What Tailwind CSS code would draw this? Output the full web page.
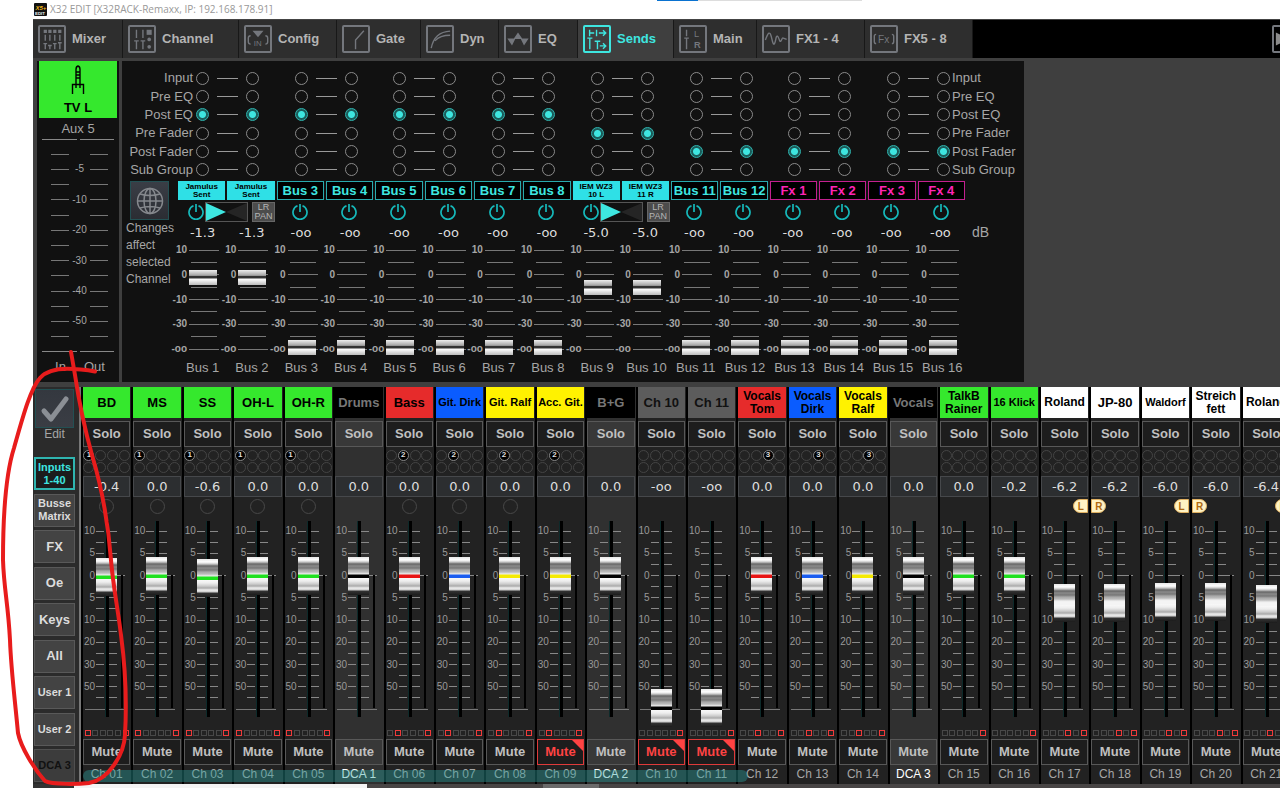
<!DOCTYPE html>
<html lang="en">
<head>
<meta charset="utf-8">
<title>X32 EDIT</title>
<script src="https://cdn.jsdelivr.net/npm/@tailwindcss/browser@4"></script>
</head>
<body class="relative flex min-h-screen flex-col overflow-x-hidden bg-white font-['Liberation_Sans',Arial,sans-serif] text-[#a6a6a6]">

<header class="relative flex h-[19px] shrink-0 items-center gap-[3px] pl-[34px]">
  <svg class="size-[13px]" viewBox="0 0 13 13" aria-hidden="true"><rect width="13" height="13" rx="1" fill="#111"/><text x="1.5" y="7" font-size="6" font-weight="700" font-style="italic" fill="#f0b71c">X5+</text><text x="1" y="11.8" font-size="4.4" font-weight="700" fill="#eee">EDIT</text></svg>
  <h1 class="font-['Open_Sans','Noto_Sans',sans-serif] text-[10px] whitespace-nowrap text-[#999]">X32 EDIT [X32RACK-Remaxx, IP: 192.168.178.91]</h1>
  <div class="absolute top-0 left-[657px] flex h-px w-[205px] bg-[#ddd]"><div class="w-[41px] bg-[#0a72d0]"></div></div>
</header>

<main class="ml-[33px] flex flex-1 flex-col overflow-hidden bg-[#3f3f3f]">
  <nav class="flex h-[39px] shrink-0 overflow-hidden bg-black border-t border-[#444]" id="tabs" aria-label="Views"></nav>

  <section class="flex h-[329px] shrink-0 items-start pt-[3px]">
    <!-- Selected channel meter -->
    <div class="ml-[4px] flex h-[321px] w-[82px] shrink-0 flex-col border-[#111] bg-[#111] px-[2px]">
      <button class="flex h-[57px] shrink-0 flex-col items-center bg-[#35e82d] text-[13px] leading-[16px] font-bold text-black">
        <svg class="mt-[4px] mb-[4px] h-[31px] w-[14px] shrink-0" viewBox="0 0 14 31" fill="none" stroke="#000" stroke-width="1.4" aria-hidden="true"><path d="M5 19V4.500Q5 1.500 7 1Q9 1.500 9 4.500V19M5 7H9M5 10H9M5 13H9M1.500 29V19.500H12.500V29M5 20V23M9 20V23"/></svg>
        TV L
      </button>
      <div class="h-[20px] pt-[2px] text-center text-[13px] leading-[18px]">Aux 5</div>
      <div id="meter" class="flex h-[225px] shrink-0 flex-col justify-between px-[3px] -mt-[5px] text-[10px]"></div>
      <div class="mt-px flex justify-center gap-[18px] pl-[4px] text-[13px] leading-[16px]"><span>In</span><span>Out</span></div>
    </div>
    <div class="ml-px h-[321px] w-[2px] shrink-0 bg-[#3f3f3f]"></div>

    <!-- Sends -->
    <div class="h-[321px] w-[902px] shrink-0 overflow-hidden bg-[#111]">
      <div id="taps" class="mt-[8px] grid h-[110px] grid-rows-6"></div>
      <div class="flex pt-[2px]">
        <div class="w-[56px] shrink-0 pl-[4px]">
          <button aria-label="Changes affect selected channel" class="ml-[4px] flex size-[39px] items-center justify-center border border-[#235053] bg-linear-to-b from-[#3a3e46] to-[#2b2d33]">
            <svg class="size-[28px]" viewBox="0 0 28 28" fill="none" stroke="#85888d" stroke-width="1.500" aria-hidden="true"><circle cx="14" cy="14" r="12.500"/><ellipse cx="14" cy="14" rx="6" ry="12.500"/><path d="M14 1.500V26.500M1.500 14H26.500M4 7Q14 10 24 7M4 21Q14 18 24 21"/></svg>
          </button>
          <p class="w-[52px] text-[12px] leading-[17px]">Changes affect selected Channel</p>
        </div>
        <div class="w-[789px] shrink-0">
          <div id="busNames" class="grid h-[19px] grid-cols-16"></div>
          <div id="busOn" class="grid h-[24px] grid-cols-8"></div>
          <div id="busVal" class="grid h-[18px] grid-cols-16 pr-[2px] font-['DejaVu_Sans',sans-serif] text-[13px] leading-[18px] text-[#ddd]"></div>
          <div id="busFader" class="grid h-[118px] grid-cols-16"></div>
          <div id="busFoot" class="grid h-[16px] grid-cols-16 text-center text-[13px] leading-[16px]"></div>
        </div>
        <div class="pt-[42px] pl-[5px] text-[14px] leading-[18px]">dB</div>
      </div>
    </div>
  </section>

  <section class="flex flex-1 overflow-hidden">
    <!-- Layer selection -->
    <aside class="flex w-[46px] shrink-0 flex-col items-center bg-[#2b2b2b] pr-[3px]">
      <button aria-label="Edit" class="mt-[2px] flex size-[39px] items-center justify-center border border-[#235053] bg-linear-to-b from-[#34383f] to-[#3a3d44]">
        <svg class="size-[30px]" viewBox="0 0 30 30" fill="none" stroke="#8b8f95" stroke-width="5" stroke-linecap="round" stroke-linejoin="round" aria-hidden="true"><path d="M4 17L11 25L26 5"/></svg>
      </button>
      <span class="text-[12px] leading-[13px]">Edit</span>
      <div id="layers" class="mt-[16px] flex h-[325px] w-[41px] flex-col justify-between"></div>
    </aside>
    <div class="flex-1 overflow-hidden border-l-2 border-[#777] bg-black pl-[2px]">
      <div class="relative w-[1210px]">
        <div id="strips" class="grid grid-cols-24"></div>
        <div class="absolute bottom-[2px] left-0 h-[12px] w-[665px] rounded-full bg-[#2ba3a0]/40"></div>
      </div>
    </div>
  </section>

  <footer class="flex h-[4px] shrink-0 bg-[#484545]">
    <div class="w-[41px] shrink-0 bg-[#333]"></div>
    <div class="w-[293px] shrink-0 bg-[#f4f4f4]"></div>
    <div class="ml-[176px] w-[56px] shrink-0 bg-[#6a6a6a]"></div>
  </footer>
</main>

<!-- Hand-drawn marker around the layer buttons -->
<svg class="pointer-events-none absolute top-[345px] left-0 h-[443px] w-[130px]" viewBox="0 345 130 443" fill="none" stroke="#e81c1c" stroke-width="4" stroke-linecap="round" stroke-linejoin="round" aria-hidden="true"><path d="M95 371.500C85 369 80 370 74 369C60 368 47 370 40 378C30 389 22 420 14 448C7 470 3 510 3 560C4 590 8 602 10 640C11 670 15 700 18 733C21 748 35 770 45 781C52 785 80 784 89 783C108 780 124 755 125 735C127 700 125 665 121 635C118 610 113 585 111 560C108 520 101 485 92 455C85 430 78 395 75 375L71 352"/></svg>

<script>
const $ = id => document.getElementById(id);
const rep = (n, f) => Array.from({length: n}, (_, i) => f(i)).join('');

/* Tabs */
const tabs = [
  ['Mixer', 'w-[90px]', '<path d="M5.700 8.500V15M10.700 8.500V15M16 8.500V15M21.500 8.500V15M3.700 18H7.700M5.700 18V24M8.700 20H12.700M10.700 20V24M14 18H18M16 18V24M19.500 17H23.500M21.500 17V24"/><path d="M4 3h3.500v3.500H4zM9 3h3.500v3.500H9zM14.300 3h3.500v3.500h-3.500zM19.700 3h3.500v3.500h-3.500z" fill="currentColor" stroke="none"/>'],
  ['Channel', 'w-[116px]', '<path d="M7 3V12M14 3V12M4.500 15H9.500M7 15V24M11.500 15H16.500M14 15V24"/><path d="M18 3h5.500v5.500H18z" fill="currentColor" stroke="none"/><circle cx="20.800" cy="13.500" r="2" fill="currentColor" stroke="none"/><circle cx="20.800" cy="21.500" r="2" fill="currentColor" stroke="none"/>'],
  ['Config', 'w-[98px]', '<path d="M7 4H19L13 11Z" fill="currentColor" stroke="none"/><path d="M5 9.500Q2.500 9.500 2.500 12V16Q2.500 18.500 5 18.500M21 9.500Q23.500 9.500 23.500 12V16Q23.500 18.500 21 18.500"/><text x="8.500" y="21" font-size="8.500" font-weight="400" fill="currentColor" stroke="none">IN</text>'],
  ['Gate', 'w-[84px]', '<path d="M12.500 24V14L21.500 4"/>'],
  ['Dyn', 'w-[78px]', '<path d="M3.500 23C6 10 13 5 24 4.500M7.500 15C12 10 18 9 24 9"/>'],
  ['EQ', 'w-[79px]', '<path d="M1.500 12.500H8.500L13 6L17.500 12.500H24.500L19.500 20L16 13H10L6.500 20Z" fill="currentColor" stroke="none"/>'],
  ['Sends', 'w-[96px]', '<path d="M5 3V10M5 6.500H10M12.500 3V10M15 6.500H22M19.500 3.500L22.500 6.500L19.500 9.500M2.500 12H8M5.200 12V24M10.500 15.500H16.500M13.500 15.500V24M16 20.500H22M19.500 17.500L22.500 20.500L19.500 23.500"/>'],
  ['Main', 'w-[83px]', '<path d="M6 3V10M3.500 12H8.500M6 12V24"/><text x="14" y="11" font-size="10" font-weight="400" fill="currentColor" stroke="none">L</text><text x="14" y="23" font-size="10" font-weight="700" fill="currentColor" stroke="none">R</text>'],
  ['FX1 - 4', 'w-[108px]', '<path d="M1.500 14C3.500 9 4.500 5.500 6.500 7C8.500 9 9 19.500 11 18.500C13 17 12.500 9 14.500 10C16.500 11 16.500 16.500 18 15.500C19.500 14.500 19.500 11 21 12L24.500 13.500"/>'],
  ['FX5 - 8', 'w-[108px]', '<path d="M4.500 8Q2.500 8 2.500 10V16Q2.500 18 4.500 18M21.500 8Q23.500 8 23.500 10V16Q23.500 18 21.500 18"/><text x="6.500" y="17" font-size="11" font-weight="400" fill="currentColor" stroke="none">Fx</text>'],
];
$('tabs').innerHTML = tabs.map(([t, w, ic]) => {
  const on = t === 'Sends';
  return `<button class="flex shrink-0 items-center gap-[6px] border-r border-[#181818] pl-[5px] text-[13px] font-bold ${w} ${on ? 'bg-[#3f3f3f] text-[#3ee6e0]' : 'bg-[#2e2e2e] text-[#b4b4b4]'}">
    <svg class="size-[28px] shrink-0 rounded-[2px] border-2 ${on ? 'border-[#3ee6e0] text-[#3ee6e0]' : 'border-[#74777d] text-[#74777d]'}" viewBox="0 0 26 26" fill="none" stroke="currentColor" stroke-width="1.500" aria-hidden="true">${ic}</svg>${t}</button>`;
}).join('') + `<button aria-label="Next view" class="ml-[299px] flex shrink-0 items-center"><svg class="size-[28px] rounded-[2px] border-2 border-[#74777d]" viewBox="0 0 26 26" aria-hidden="true"><path d="M2 6L16 13L2 20Z" fill="#8b8b8b"/></svg></button>`;

/* Input and output level meter */
const marks = [null, '', '-5', '', '-10', '', '-20', '', '-30', '', '-40', '', '-50', '', null];
$('meter').innerHTML = marks.map(m => m === null
  ? '<div class="flex h-[12px] items-center gap-[3px]"><i class="h-px flex-1 bg-[#888]"></i><i class="h-px flex-1 bg-[#888]"></i></div>'
  : `<div class="flex h-[12px] items-center pr-[6px] pl-[9px]"><i class="h-px w-[18px] bg-[#777]"></i><span class="flex-1 text-center leading-[12px]">${m}</span><i class="h-px w-[18px] bg-[#777]"></i></div>`).join('');

/* Tap points */
const taps = ['Input', 'Pre EQ', 'Post EQ', 'Pre Fader', 'Post Fader', 'Sub Group'];
const tapOf = b => b < 8 ? 2 : b < 10 ? 3 : 4;
const radio = (b, t) => `<input type="radio" name="tap-${b}" aria-label="Bus ${b + 1} ${taps[t]}" ${tapOf(b) === t ? 'checked' : ''} class="size-[13px] shrink-0 appearance-none rounded-full border border-[#8a8a8a] checked:border-[#2fb5b0] checked:bg-[radial-gradient(circle,#3ee6e0_0_3px,#1b5c5a_4px)]">`;
$('taps').innerHTML = taps.map((t, r) => `<div class="flex items-center text-[13px] whitespace-nowrap"><span class="w-[71px] shrink-0 text-right">${t}</span>
  <div class="ml-[3px] flex w-[754px] shrink-0 justify-between">${rep(8, p => `<div class="flex items-center gap-[8px]">${radio(2 * p, r)}<i class="h-px w-[21px] bg-[#999]"></i>${radio(2 * p + 1, r)}</div>`)}</div><span class="ml-[2px]">${t}</span></div>`).join('');

/* Buses */
const buses = ['Jamulus Sent', 'Jamulus Sent', 'Bus 3', 'Bus 4', 'Bus 5', 'Bus 6', 'Bus 7', 'Bus 8', 'IEM WZ3 10&nbsp;L', 'IEM WZ3 11&nbsp;R', 'Bus 11', 'Bus 12', 'Fx 1', 'Fx 2', 'Fx 3', 'Fx 4'];
const linked = b => b < 2 || b === 8 || b === 9;
$('busNames').innerHTML = buses.map((n, b) => `<button class="mr-[2px] flex items-center justify-center text-center font-bold ${linked(b) ? 'bg-[#2fe0e6] px-[5px] text-[8px] leading-[8px] text-black' : b > 11 ? 'border border-[#c3208f] bg-black text-[13px] leading-[16px] whitespace-nowrap text-[#ff25b5]' : 'border border-[#29a9ad] bg-black text-[13px] leading-[16px] whitespace-nowrap text-[#3ee6e0]'}">${n}</button>`).join('');
const power = b => `<button aria-label="Bus ${b} on" class="size-[16px] shrink-0"><svg class="size-[16px]" viewBox="0 0 16 16" fill="none" stroke="#16b9bb" stroke-width="1.700" aria-hidden="true"><path d="M5.500 1.800A7 7 0 1 0 10.500 1.800M8 0V8"/></svg></button>`;
$('busOn').innerHTML = rep(8, p => linked(2 * p)
  ? `<div class="flex items-center pl-[10px]">${power(2 * p + 1)}<svg class="ml-px h-[20px] w-[43px] shrink-0 border border-[#555] bg-[#111]" viewBox="0 0 41 18" aria-hidden="true"><path d="M0 0L20 9L0 18Z" fill="#3ee6e0"/><path d="M41 0L20 9L41 18Z" fill="#252525"/></svg><button class="ml-[4px] h-[20px] w-[23px] shrink-0 border border-[#666] bg-[#4c4c4c] text-[9px] leading-[9px] text-[#b5b5b5]">LR PAN</button></div>`
  : `<div class="grid grid-cols-2 items-center"><div class="flex pl-[15px]">${power(2 * p + 1)}</div><div class="flex pl-[15px]">${power(2 * p + 2)}</div></div>`);
$('busVal').innerHTML = rep(16, b => `<output class="text-center">${b < 2 ? '-1.3' : linked(b) ? '-5.0' : '-oo'}</output>`);
const sendMarks = ['10', '', '0', '', '-10', '', '-30', '', '-oo'];
const sendVal = b => b < 2 ? 70 : linked(b) ? 60 : 0;
$('busFader').innerHTML = rep(16, b => `<div class="relative pt-[3px]">
  <div class="-ml-[8px] flex h-[109px] flex-col justify-between text-[10px] font-bold">${sendMarks.map(m => `<div class="flex h-[10px] items-center leading-[10px]"><span class="w-[17px] shrink-0 text-right">${m}</span>${m ? '<i class="ml-[2px] h-px w-[30px] shrink-0 bg-[#777]"></i>' : '<i class="ml-[4px] h-px w-[26px] shrink-0 bg-[#777]"></i>'}</div>`).join('')}</div>
  <input type="range" min="0" max="97" value="${sendVal(b)}" aria-label="Bus ${b + 1} send level" class="absolute top-px left-[11px] m-0 h-[112px] w-[28px] appearance-none bg-transparent [direction:rtl] [writing-mode:vertical-lr] [&::-webkit-slider-thumb]:h-[15px] [&::-webkit-slider-thumb]:w-[28px] [&::-webkit-slider-thumb]:appearance-none [&::-webkit-slider-thumb]:bg-[linear-gradient(#eee,#aaa_5px,#888_6px,#333_6px_8px,#fff_9px,#ddd_12px,#bbb)]"></div>`);
$('busFoot').innerHTML = rep(16, b => `<span class="whitespace-nowrap">Bus ${b + 1}</span>`);

/* Layers */
const layers = ['Inputs<br>1-40', 'Busse<br>Matrix', 'FX', 'Oe', 'Keys', 'All', 'User 1', 'User 2', 'DCA 3'];
$('layers').innerHTML = layers.map((l, i) => {
  const face = i < 2 || i > 5 ? 'text-[11px] leading-[13px]' : 'text-[13px] leading-[14px]';
  const tone = i === 0 ? 'border-2 border-[#2fb5b0] bg-[#1c1c1c] text-[#3ee6e0]' : i === 8 ? 'border border-[#505050] bg-[#3c3c3c] text-[#111]' : 'border border-[#595959] bg-[#434343] text-[#dcdcdc]';
  return `<button class="h-[33px] w-[41px] font-bold whitespace-nowrap ${face} ${tone}">${l}</button>`;
}).join('');

/* Channel strips: name, tile, foot, value, cap top, lit mute group, aux ring, lit flags, state */
const G = 'bg-[#35e82d] text-black', R = 'bg-[#e62b2b] text-black', B = 'bg-[#0a5cff] text-black', Y = 'bg-[#fff200] text-black', K = 'bg-black text-[#777]', W = 'bg-white text-black', N = 'bg-[#5c5c5c] text-[#111]';
const line = {[G]: '#1fe01f', [R]: '#e81414', [B]: '#1a5cf0', [Y]: '#f5ea00', [K]: '#000', [W]: '#f4f4f4', [N]: '#000'};
const strips = [
  ['BD', G, 'Ch 01', '-0.4', 558, 1, 1, [0, 5]], ['MS', G, 'Ch 02', '0.0', 557, 1, 1, [0, 5]], ['SS', G, 'Ch 03', '-0.6', 559, 1, 1, [0, 5]],
  ['OH-L', G, 'Ch 04', '0.0', 557, 1, 1, [0, 5]], ['OH-R', G, 'Ch 05', '0.0', 557, 1, 1, [0, 5]], ['Drums', K, 'DCA 1', '0.0', 557, 0, 0, []],
  ['Bass', R, 'Ch 06', '0.0', 557, 2, 1, [1, 5]], ['Git. Dirk', B, 'Ch 07', '0.0', 557, 2, 1, [1, 5]], ['Git. Ralf', Y, 'Ch 08', '0.0', 557, 2, 1, [1, 5]],
  ['Acc. Git.', Y, 'Ch 09', '0.0', 557, 2, 0, [1, 5], 'muted'], ['B+G', K, 'DCA 2', '0.0', 557, 0, 0, []],
  ['Ch 10', N, 'Ch 10', '-oo', 689, 0, 0, [5], 'muted'], ['Ch 11', N, 'Ch 11', '-oo', 689, 0, 0, [5], 'muted'],
  ['Vocals Tom', R, 'Ch 12', '0.0', 557, 3, 0, [2, 5]], ['Vocals Dirk', B, 'Ch 13', '0.0', 557, 3, 0, [2, 5]], ['Vocals Ralf', Y, 'Ch 14', '0.0', 557, 3, 0, [2, 5]],
  ['Vocals', K, 'DCA 3', '0.0', 557, 0, 0, []], ['TalkB Rainer', G, 'Ch 15', '0.0', 557, 0, 0, [5]], ['16 Klick', G, 'Ch 16', '-0.2', 557, 0, 0, [5]],
  ['Roland', W, 'Ch 17', '-6.2', 584, 0, 0, [3, 5], 'L'], ['JP-80', W, 'Ch 18', '-6.2', 584, 0, 0, [3, 5], 'R'],
  ['Waldorf', W, 'Ch 19', '-6.0', 583, 0, 0, [3, 5], 'L'], ['Streich fett', W, 'Ch 20', '-6.0', 583, 0, 0, [3, 5], 'R'], ['Roland', W, 'Ch 21', '-6.4', 585, 0, 0, [3, 5], 'L'],
];
const small = ['Git. Dirk', 'Git. Ralf', 'Acc. Git.', '16 Klick', 'Waldorf'];
const scale = ['10', '', '5', '', '0', '', '5', '', '10', '', '20', '', '30', '', '50', ''];
const tick = m => `<div class="flex h-[10px] items-center leading-[10px]"><span class="w-[12px] shrink-0 text-right">${m}</span><i class="ml-px h-px w-[8px] shrink-0 bg-[#888]"></i><i class="ml-[5px] h-px shrink-0 bg-[#888] ${m === '0' ? 'w-[16px]' : 'w-[8px]'}"></i></div>`;
$('strips').innerHTML = strips.map(([name, tile, foot, val, top, grp, ring, lit, flag]) => {
  const dca = foot.startsWith('DCA'), muted = flag === 'muted';
  const face = small.includes(name) ? 'text-[11px] whitespace-nowrap' : name === 'Roland' ? 'text-[12px] whitespace-nowrap' : name.length > 8 ? 'text-[12px]' : 'text-[13px] whitespace-nowrap';
  return `<div class="flex flex-col border-r-2 border-black pr-px ${dca ? 'bg-[#303030]' : 'bg-[#222]'}">
    <button class="h-[31px] text-center leading-[13px] font-bold ${face} ${tile}">${name}</button>
    <button class="mt-[3px] h-[26px] border border-[#585858] text-[13px] leading-[24px] font-bold text-[#c0c0c0] ${dca ? 'bg-[#383838]' : 'bg-[#1d1d1d]'}">Solo</button>
    <div class="mt-[2px] grid h-[25px] grid-cols-4 place-items-center">${dca ? '' : rep(8, i => grp && i === grp - 1
      ? `<span class="flex size-[11px] items-center justify-center rounded-full border border-[#888] bg-black text-[8px] leading-[8px] font-bold text-[#ddd]">${grp}</span>`
      : '<span class="size-[11px] rounded-full border border-[#444]"></span>')}</div>
    <output class="mt-[2px] h-[21px] border border-[#46484b] bg-[#2c2e30] text-center font-['DejaVu_Sans',sans-serif] text-[13px] leading-[19px] text-[#ddd]">${val}</output>
    <div class="flex h-[18px] items-center ${flag === 'L' ? 'justify-end' : flag === 'R' ? 'justify-start' : 'justify-center'}">${ring ? '<span class="size-[15px] rounded-full border border-[#484848]"></span>' : flag === 'L' || flag === 'R' ? `<span class="flex h-[14px] w-[15px] items-center justify-center border border-[#e0b060] bg-[#fff3c4] text-[10px] font-bold text-[#b06a10] ${flag === 'L' ? 'rounded-l-full' : 'rounded-r-full'}">${flag}</span>` : ''}</div>
    <div class="relative h-[214px] pt-[11px] text-[10px] text-[#999]">
      <div class="flex h-[188px] flex-col justify-between">${scale.map(tick).join('')}<div class="flex h-[10px] items-center"><i class="ml-[2px] h-px w-[40px] bg-[#777]"></i></div></div>
      <i class="absolute top-[6px] left-[22px] h-[196px] w-[4px] border-l border-[#0d2a2a] bg-black"></i>
      <i class="absolute top-[60px] left-[38px] h-[133px] w-[2px] bg-black"></i>
      <input type="range" min="0" max="168" value="${168 - (top - 521)}" aria-label="${foot} level" style="--cap:${line[tile]}" class="absolute top-[6px] left-[13px] m-0 h-[206px] w-[21px] appearance-none bg-transparent [direction:rtl] [writing-mode:vertical-lr] [&::-webkit-slider-thumb]:h-[38px] [&::-webkit-slider-thumb]:w-[21px] [&::-webkit-slider-thumb]:appearance-none [&::-webkit-slider-thumb]:bg-[linear-gradient(#e8e8e8,#fff_3px,#c8c8c8_5px,#666_7px,#8a8a8a_9px,#777_11px,#a8a8a8_13px,#bbb_15px,#eee_17px,var(--cap)_18px_21px,#f8f8f8_21px,#eee_24px,#ccc_27px,#aaa_29px,#eee_31px,#ccc_33px,#333_34px,#1c1c1c_38px)]">
    </div>
    <div class="grid h-[8px] grid-cols-6 place-items-center px-px">${dca ? '' : rep(6, i => `<span class="size-[6px] border ${lit.includes(i) ? 'border-[#f03a3a]' : 'border-[#484848]'}"></span>`)}</div>
    <button aria-pressed="${muted}" class="relative mt-[2px] h-[26px] border text-[13px] leading-[24px] font-bold ${muted ? 'border-[#e03a3a] bg-[#1d1d1d] text-[#ff4343]' : dca ? 'border-[#585858] bg-[#383838] text-[#c0c0c0]' : 'border-[#585858] bg-[#1d1d1d] text-[#c0c0c0]'}">Mute${muted ? '<svg class="absolute top-0 right-0 size-[11px]" viewBox="0 0 11 11" aria-hidden="true"><path d="M0 0H11V11Z" fill="#ff4343"/></svg>' : ''}</button>
    <div class="h-[19px] text-center text-[12px] leading-[19px] whitespace-nowrap ${dca ? 'text-white' : ''}">${foot}</div>
  </div>`;
}).join('');
</script>
</body>
</html>
